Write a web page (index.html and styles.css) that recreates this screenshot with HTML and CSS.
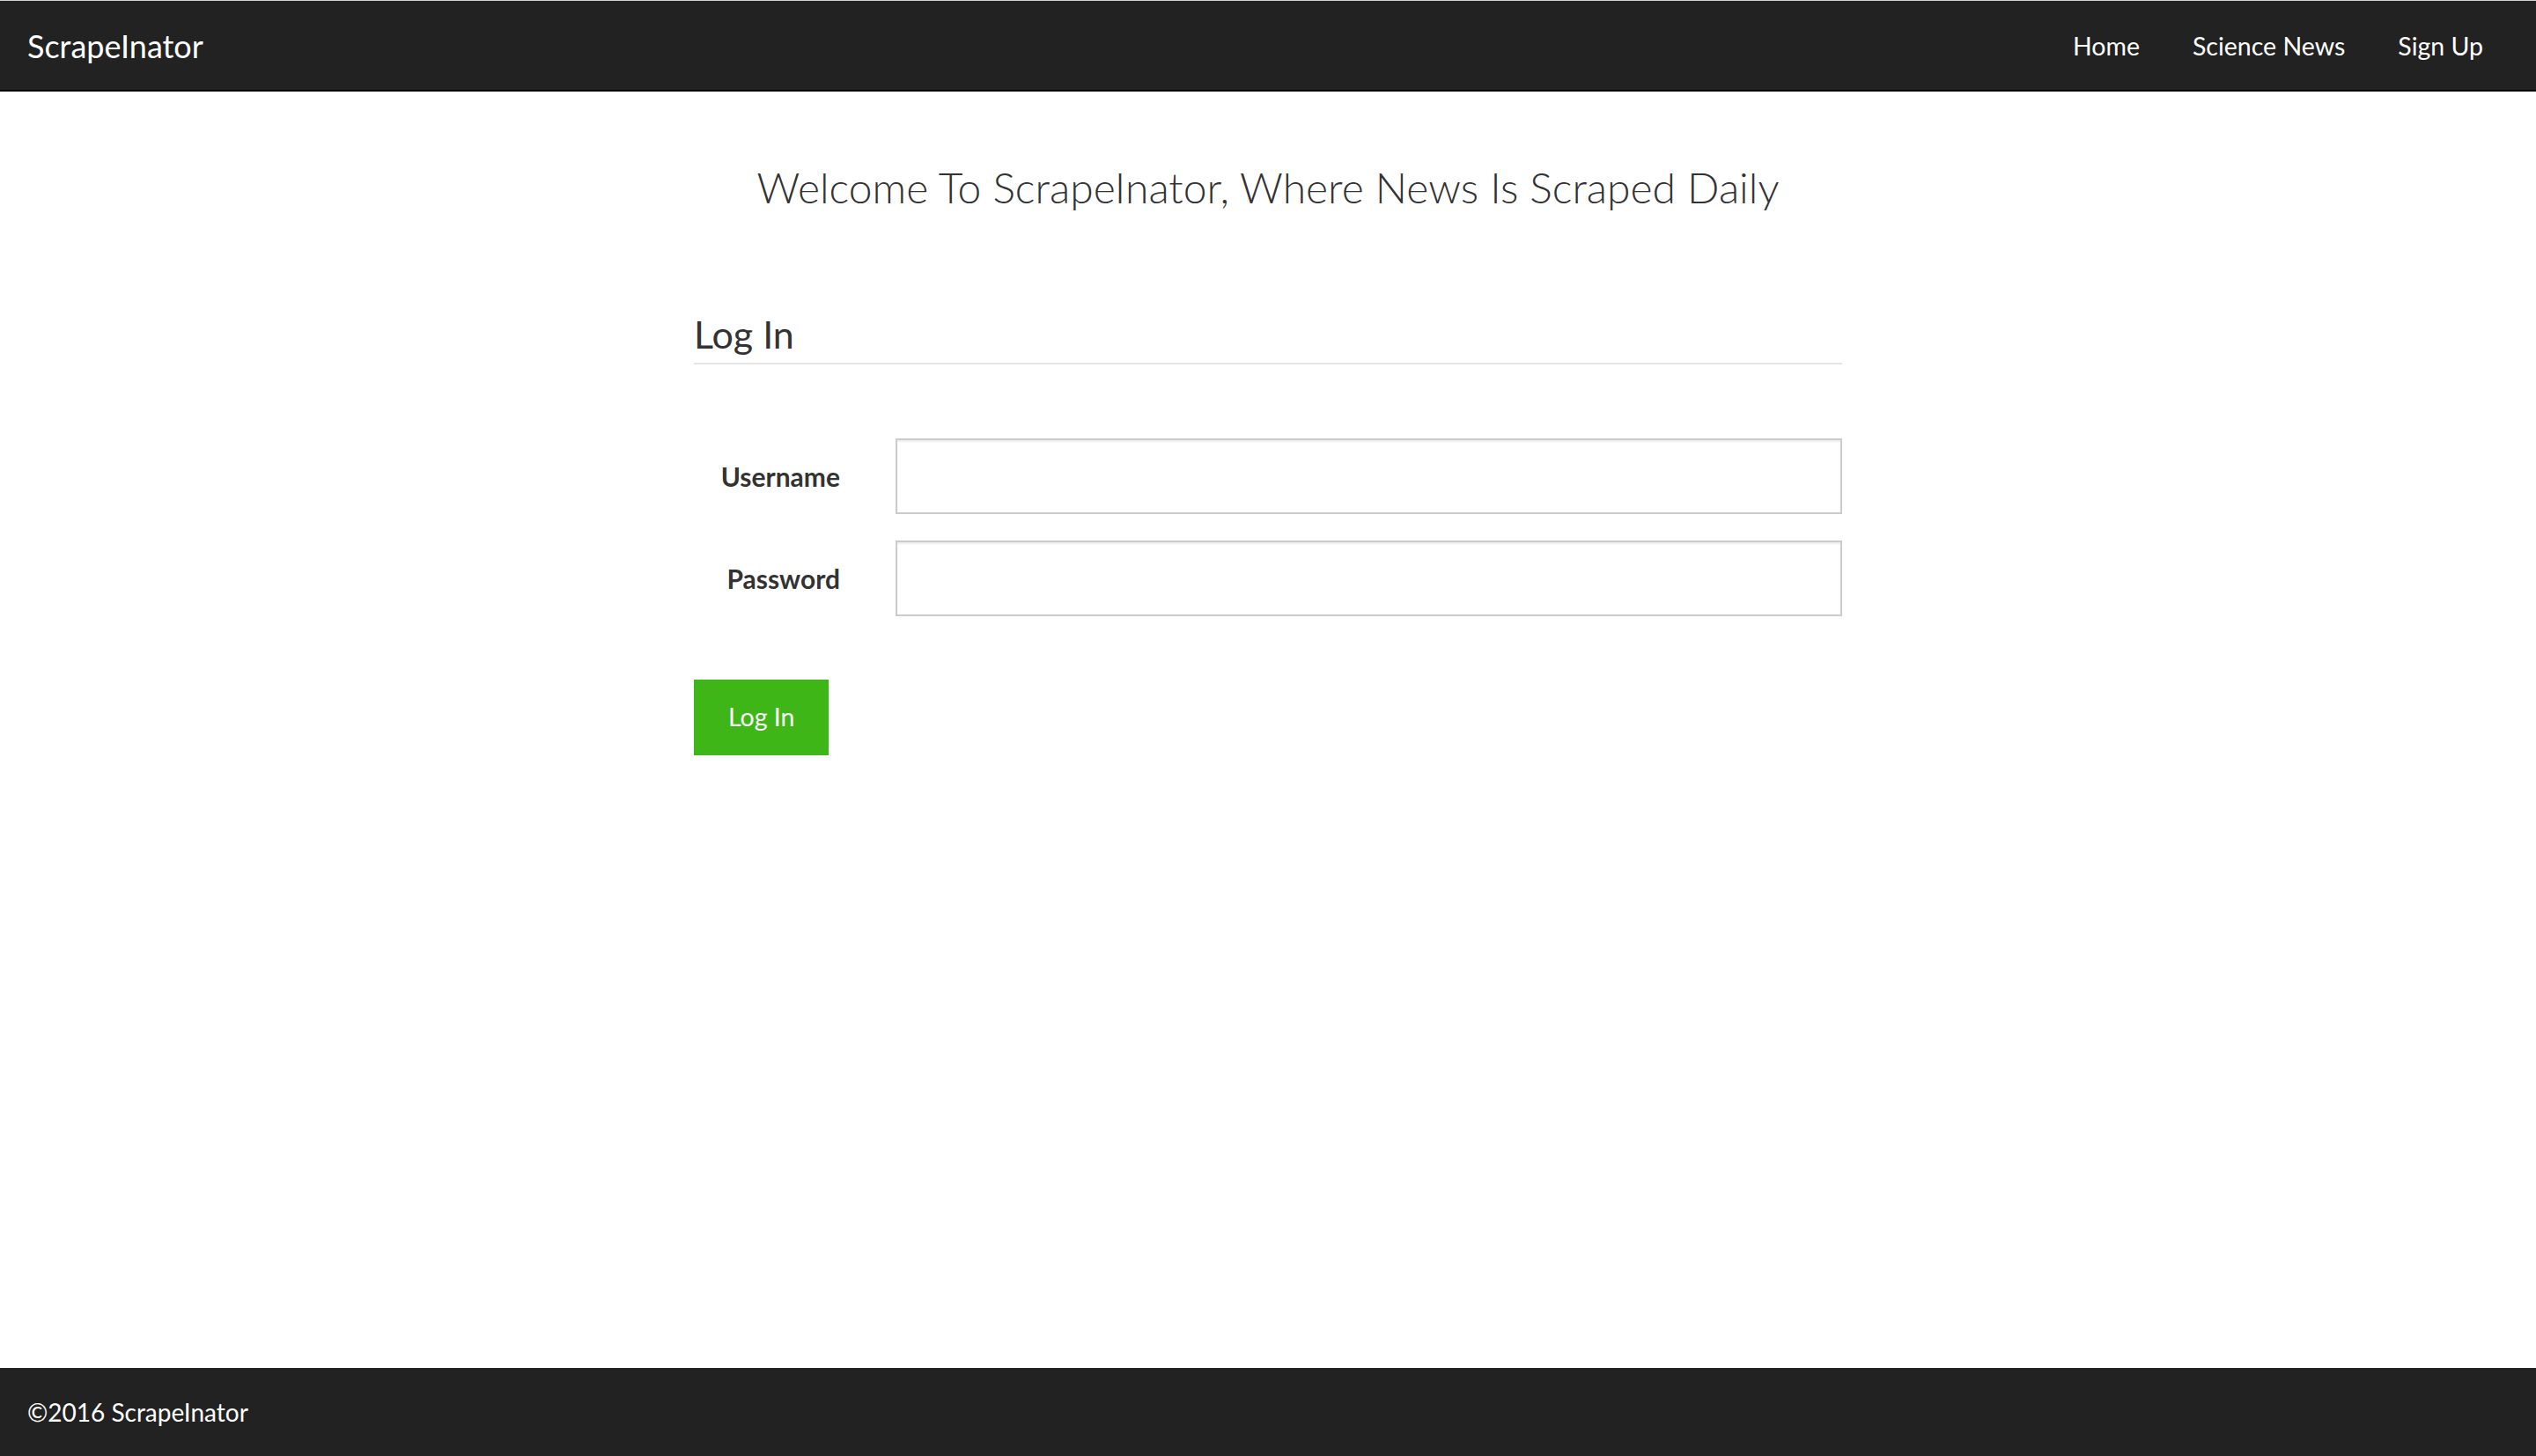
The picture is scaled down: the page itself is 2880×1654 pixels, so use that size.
FILE: index.html
```html
<!DOCTYPE html>
<html lang="en">
<head>
<meta charset="utf-8">
<title>ScrapeInator</title>
<link rel="stylesheet" href="styles.css">
</head>
<body>
<nav class="navbar">
  <a class="brand" href="#">ScrapeInator</a>
  <ul class="nav-links">
    <li><a href="#">Home</a></li>
    <li><a href="#">Science News</a></li>
    <li><a href="#">Sign Up</a></li>
  </ul>
</nav>
<main class="main">
  <div class="container">
    <h3 class="welcome">Welcome To ScrapeInator, Where News Is Scraped Daily</h3>
    <form class="login-form">
      <div class="legend">Log In</div>
      <div class="form-row">
        <label class="control-label" for="username">Username</label>
        <input class="form-control" id="username" type="text">
      </div>
      <div class="form-row">
        <label class="control-label" for="password">Password</label>
        <input class="form-control" id="password" type="password">
      </div>
      <div class="actions">
        <button class="btn-success" type="button">Log In</button>
      </div>
    </form>
  </div>
</main>
<footer class="footer">©2016 ScrapeInator</footer>
</body>
</html>
```
FILE: styles.css
```css
* { box-sizing: border-box; }
html, body { margin: 0; padding: 0; }
body {
  font-family: "Lato", "Liberation Sans", sans-serif;
  font-size: 30px;
  line-height: 43px;
  color: #333;
  background: #fff;
  min-height: 100vh;
  display: flex;
  flex-direction: column;
}
.navbar {
  display: flex;
  align-items: center;
  justify-content: space-between;
  height: 104px;
  background: #222;
  border-top: 1px solid #d2d2d2;
  border-bottom: 2px solid #080808;
  padding: 2px 30px 0 31px;
}
.brand {
  color: #fff;
  text-decoration: none;
  font-size: 36px;
  line-height: 99px;
}
.nav-links {
  display: flex;
  list-style: none;
  margin: 0;
  padding: 0;
}
.nav-links a {
  display: block;
  color: #fff;
  text-decoration: none;
  font-size: 28.5px;
  line-height: 99px;
  padding: 0 30px;
}
.main { flex: 1; }
.container {
  width: 1304px;
  margin: 0 auto;
}
.welcome {
  margin: 81px 0 0;
  font-size: 48px;
  font-weight: 300;
  line-height: 55px;
  text-align: center;
  color: #333;
}
.login-form { margin-top: 108px; }
.legend {
  font-size: 43px;
  line-height: 64px;
  border-bottom: 2px solid #e5e5e5;
  margin-bottom: 84px;
  color: #333;
}
.form-row {
  display: grid;
  grid-template-columns: 166px 1fr;
  column-gap: 63px;
  align-items: center;
  margin-bottom: 30px;
}
.control-label {
  text-align: right;
  font-weight: 700;
  font-size: 30px;
}
.form-control {
  height: 86px;
  width: 100%;
  border: 2px solid #ccc;
  border-radius: 0;
  box-shadow: inset 0 2px 2px rgba(0, 0, 0, 0.075);
  font-family: inherit;
  font-size: 30px;
  padding: 20px 30px;
  background: #fff;
}
.actions { margin-top: 72px; }
.btn-success {
  background: #3fb618;
  border: 2px solid #3fb618;
  color: #fff;
  font-family: inherit;
  font-size: 28.5px;
  line-height: 43px;
  padding: 19px 37px 20px;
  border-radius: 0;
  cursor: pointer;
}
.footer {
  height: 100px;
  background: #222;
  color: #fff;
  font-size: 28px;
  line-height: 100px;
  padding-left: 31px;
}
```
